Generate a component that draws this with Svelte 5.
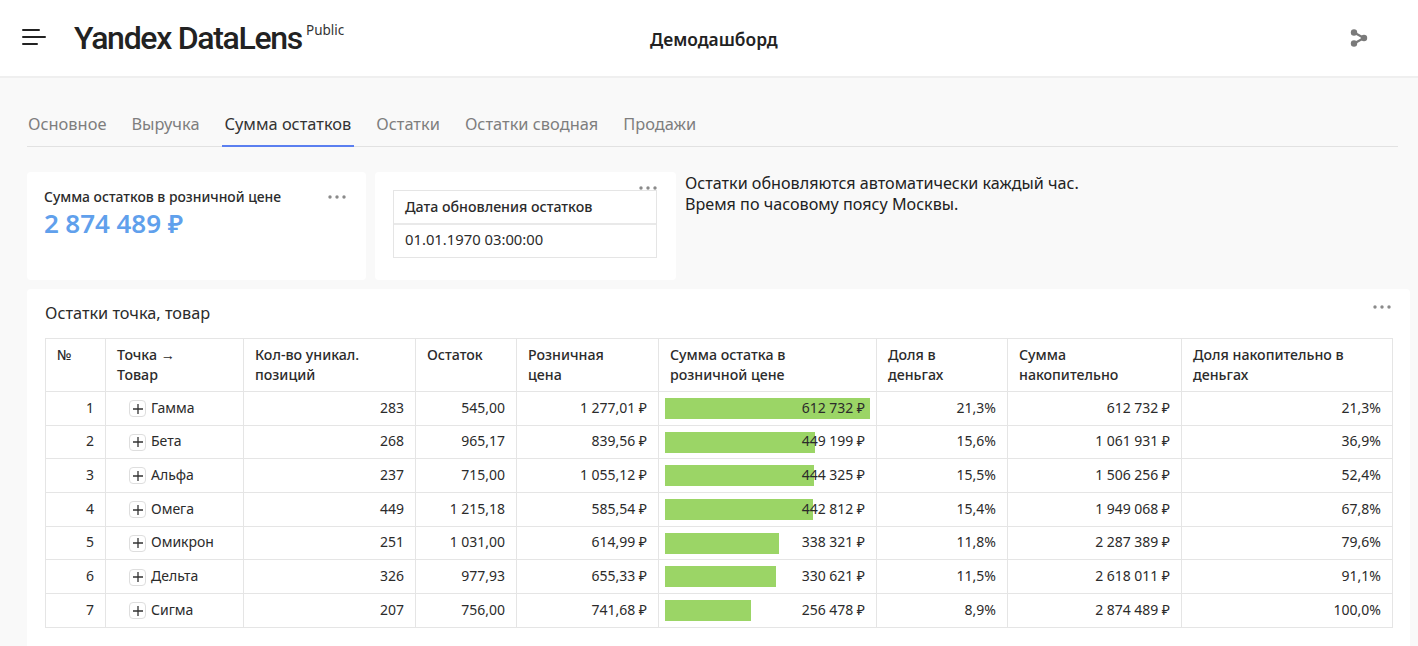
<script>
  const T = '\u2005';
  const N = '\u00a0';
  const headers = ['№', 'Точка →\nТовар', 'Кол-во уникал.\nпозиций', 'Остаток', 'Розничная\nцена', 'Сумма остатка в\nрозничной цене', 'Доля в\nденьгах', 'Сумма\nнакопительно', 'Доля накопительно в\nденьгах'];
  const widths = [60, 138, 172, 101, 142, 218, 131, 174, 211];
  const rows = [
    ['1', 'Гамма', '283', '545,00', `1${T}277,01${N}₽`, 205, `612${T}732${N}₽`, '21,3%', `612${T}732${N}₽`, '21,3%'],
    ['2', 'Бета', '268', '965,17', `839,56${N}₽`, 150, `449${T}199${N}₽`, '15,6%', `1${T}061${T}931${N}₽`, '36,9%'],
    ['3', 'Альфа', '237', '715,00', `1${T}055,12${N}₽`, 149, `444${T}325${N}₽`, '15,5%', `1${T}506${T}256${N}₽`, '52,4%'],
    ['4', 'Омега', '449', `1${T}215,18`, `585,54${N}₽`, 148, `442${T}812${N}₽`, '15,4%', `1${T}949${T}068${N}₽`, '67,8%'],
    ['5', 'Омикрон', '251', `1${T}031,00`, `614,99${N}₽`, 114, `338${T}321${N}₽`, '11,8%', `2${T}287${T}389${N}₽`, '79,6%'],
    ['6', 'Дельта', '326', '977,93', `655,33${N}₽`, 111, `330${T}621${N}₽`, '11,5%', `2${T}618${T}011${N}₽`, '91,1%'],
    ['7', 'Сигма', '207', '756,00', `741,68${N}₽`, 86, `256${T}478${N}₽`, '8,9%', `2${T}874${T}489${N}₽`, '100,0%']
  ];
  const tabs = ['Основное', 'Выручка', 'Сумма остатков', 'Остатки', 'Остатки сводная', 'Продажи'];
</script>

{#snippet dots()}
  <svg class="dots" width="18" height="4" viewBox="0 0 18 4"><circle cx="2" cy="2" r="1.7"/><circle cx="9" cy="2" r="1.7"/><circle cx="16" cy="2" r="1.7"/></svg>
{/snippet}

<div class="page">
  <header class="top">
    <div class="brand">
      <svg class="burger" width="24" height="18" viewBox="0 0 24 18"><path d="M1 2h16M1 9h22M1 16h14" fill="none" stroke="#222" stroke-width="2" stroke-linecap="round"/></svg>
      <span class="logo">Yandex DataLens</span>
      <span class="public">Public</span>
    </div>
    <div class="title">Демодашборд</div>
    <svg class="share" width="20" height="20" viewBox="0 0 20 20"><path d="M5 4.500 15 10 5 15.500" fill="none" stroke="#7a7a7a" stroke-width="2.200"/><circle cx="5" cy="4.500" r="3.200" fill="#7a7a7a"/><circle cx="5" cy="15.500" r="3.200" fill="#7a7a7a"/><circle cx="15" cy="10" r="3.200" fill="#7a7a7a"/></svg>
  </header>

  <main class="content">
    <nav class="tabs">
      {#each tabs as t, i}
        <span class="tab" class:active={i === 2}>{t}</span>
      {/each}
    </nav>

    <div class="upper">
      <section class="card metric">
        <div class="metric-head">
          <span class="metric-name">Сумма остатков в розничной цене</span>
          {@render dots()}
        </div>
        <div class="metric-value">2{T}874{T}489{N}₽</div>
      </section>
      <section class="card datecard">
        <div class="date-menu">{@render dots()}</div>
        <div class="datebox">
          <div class="date-h">Дата обновления остатков</div>
          <div class="date-v">01.01.1970 03:00:00</div>
        </div>
      </section>
      <p class="note">Остатки обновляются автоматически каждый час.<br />Время по часовому поясу Москвы.</p>
    </div>

    <section class="card wide">
      <div class="wide-head">
        <span class="wide-title">Остатки точка, товар</span>
        {@render dots()}
      </div>
      <table>
        <colgroup>
          {#each widths as w}<col style="width:{w}px" />{/each}
        </colgroup>
        <thead>
          <tr>{#each headers as h}<th>{h}</th>{/each}</tr>
        </thead>
        <tbody>
          {#each rows as r}
            <tr>
              <td class="num">{r[0]}</td>
              <td class="name"><span class="plus"><svg width="10" height="10" viewBox="0 0 10 10"><path d="M5 0v10M0 5h10" stroke="#333" stroke-width="1.300"/></svg></span>{r[1]}</td>
              <td class="num">{r[2]}</td>
              <td class="num">{r[3]}</td>
              <td class="num">{r[4]}</td>
              <td class="barcell"><span class="bar" style="width:{r[5]}px"></span><span class="barval">{r[6]}</span></td>
              <td class="num">{r[7]}</td>
              <td class="num">{r[8]}</td>
              <td class="num">{r[9]}</td>
            </tr>
          {/each}
        </tbody>
      </table>
    </section>
  </main>
</div>

<style>
  :global(body) {
    margin: 0;
    background: #f9f9f9;
    overflow: hidden;
  }
  .page {
    font-family: "Noto Sans", "Open Sans", sans-serif;
    color: #2b2b2b;
    height: 646px;
    overflow: hidden;
  }
  .top {
    position: relative;
    display: flex;
    align-items: center;
    justify-content: space-between;
    height: 76px;
    background: #fff;
    border-bottom: 2px solid #efefef;
    box-sizing: content-box;
    padding: 0 49px 0 22px;
  }
  .brand {
    display: flex;
    align-items: flex-start;
    width: 500px;
  }
  .burger {
    margin-top: 9px;
  }
  .logo {
    margin-left: 28px;
    font-family: Roboto, sans-serif;
    font-weight: 500;
    font-size: 32px;
    line-height: 38px;
    letter-spacing: -1.300px;
    color: #222;
  }
  .public {
    margin-left: 4px;
    margin-top: 2px;
    font-size: 13.500px;
    line-height: 18px;
    color: #333;
  }
  .title {
    position: absolute;
    left: 650px;
    top: 27px;
    font-weight: 600;
    font-size: 17.400px;
    line-height: 24px;
    color: #222;
  }
  .share {
    display: block;
    margin-top: 0;
  }
  .content {
    padding: 0 8px 0 27px;
  }
  .tabs {
    display: flex;
    gap: 23px;
    height: 68px;
    align-items: flex-end;
    margin-right: 12px;
    border-bottom: 1px solid #e2e2e2;
  }
  .tab {
    font-size: 16.400px;
    line-height: 22px;
    padding: 0 1px 10px;
    color: #7e7e7e;
    margin-bottom: -1px;
    border-bottom: 2px solid transparent;
  }
  .tab.active {
    color: #333;
    border-bottom-color: #5b7ff0;
    padding: 0 3px 10px;
    margin: 0 -2px -1px;
  }
  .upper {
    display: flex;
    gap: 9px;
    margin-top: 25px;
    height: 108px;
  }
  .card {
    background: #fff;
    border-radius: 4px;
  }
  .metric {
    width: 339px;
    box-sizing: border-box;
    padding: 15px 20px 0 17px;
  }
  .metric-head {
    display: flex;
    justify-content: space-between;
    align-items: center;
  }
  .metric-name {
    font-size: 13.900px;
    line-height: 20px;
    font-weight: 500;
    color: #2b2b2b;
  }
  .metric-value {
    font-size: 26px;
    line-height: 32px;
    font-weight: 600;
    color: #60a0ec;
  }
  .dots {
    display: block;
    fill: #8a8a8a;
  }
  .datecard {
    position: relative;
    width: 301px;
    box-sizing: border-box;
    padding: 18px 0 0 18px;
  }
  .date-menu {
    position: absolute;
    top: 14px;
    right: 19px;
  }
  .datebox {
    width: 264px;
    box-sizing: border-box;
    border: 1px solid #e5e5e5;
    font-size: 14px;
  }
  .date-h {
    height: 32px;
    line-height: 32px;
    padding-left: 11px;
    font-weight: 500;
    font-size: 14.200px;
    border-bottom: 2px solid #e9e9e9;
  }
  .date-v {
    height: 32px;
    line-height: 28px;
    padding-left: 11px;
    font-size: 14.800px;
  }
  .note {
    margin: 1px 0 0;
    font-size: 16.150px;
    line-height: 21px;
    color: #222;
  }
  .wide {
    margin-top: 9px;
    height: 360px;
    padding: 0 19px 0 18px;
    box-sizing: border-box;
  }
  .wide-head {
    display: flex;
    justify-content: space-between;
    align-items: flex-start;
    height: 49px;
    padding-top: 13px;
    box-sizing: border-box;
  }
  .wide-title {
    font-size: 16.300px;
    line-height: 22px;
    color: #2b2b2b;
  }
  .wide-head .dots {
    margin-top: 3px;
  }
  table {
    width: 1347px;
    table-layout: fixed;
    border-collapse: collapse;
    font-size: 14px;
  }
  th,
  td {
    border: 1px solid #e5e5e5;
    padding: 0 11px;
  }
  th {
    height: 53px;
    box-sizing: border-box;
    font-weight: 500;
    font-size: 14.200px;
    text-align: left;
    vertical-align: top;
    line-height: 20px;
    padding-top: 6px;
    white-space: pre-line;
  }
  td {
    height: 33.700px;
    box-sizing: border-box;
    line-height: 20px;
    white-space: nowrap;
    padding-bottom: 1.500px;
  }
  .num {
    text-align: right;
  }
  .name {
    padding-left: 23px;
  }
  .plus {
    display: inline-flex;
    align-items: center;
    justify-content: center;
    width: 17px;
    height: 17px;
    margin-right: 5px;
    box-sizing: border-box;
    border: 1px solid #dedede;
    border-radius: 4px;
    vertical-align: -1px;
  }
  .barcell {
    position: relative;
    text-align: right;
  }
  .bar {
    position: absolute;
    left: 6px;
    top: 6px;
    height: 21px;
    background: #9bd566;
  }
  .barval {
    position: relative;
  }
</style>
